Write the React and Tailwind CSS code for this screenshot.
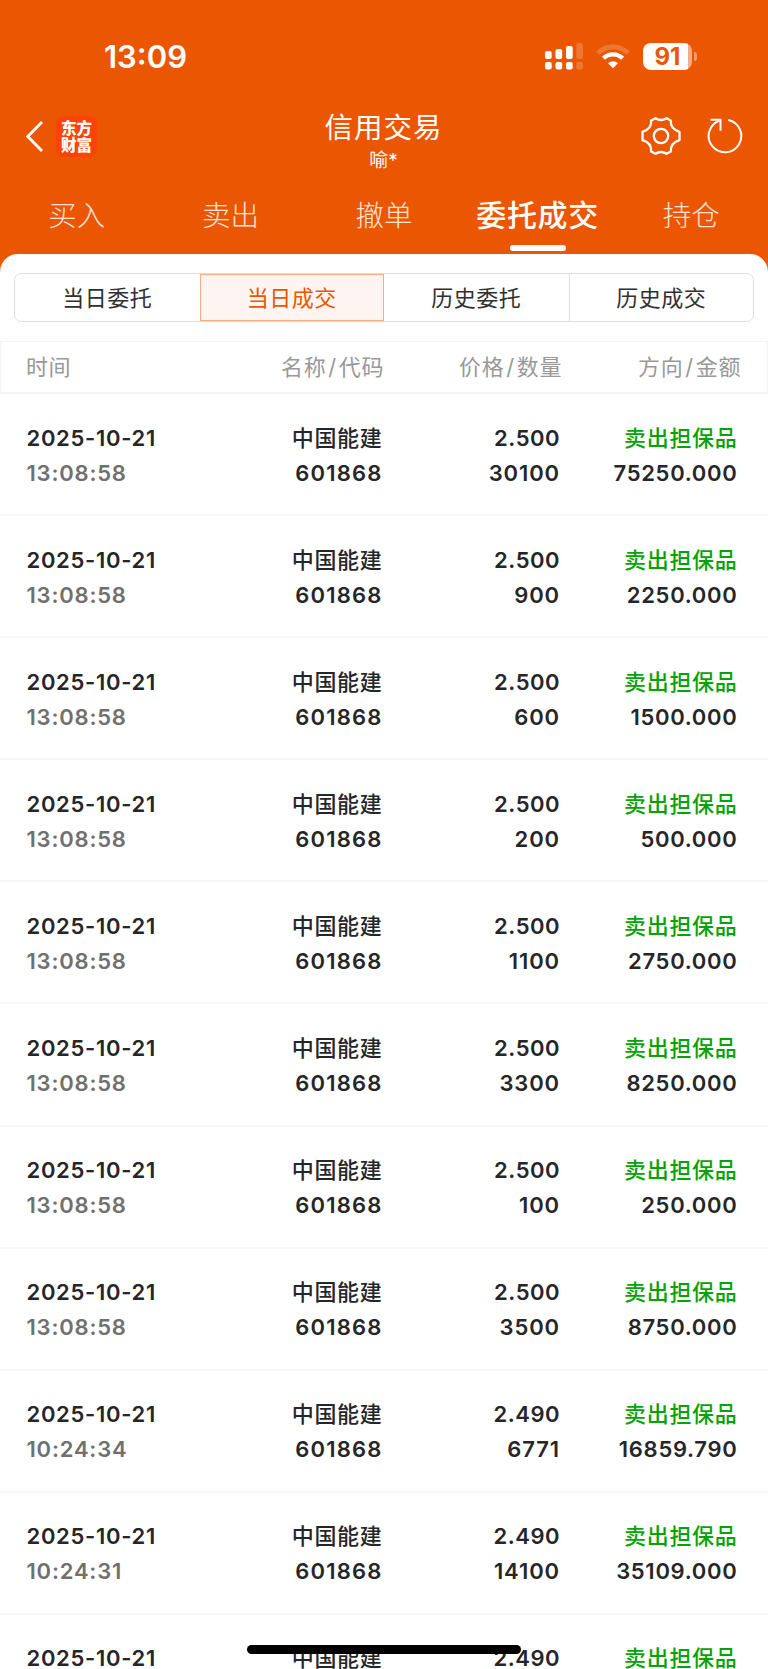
import React from "react";

const trades = [
  { time: "13:08:58", price: "2.500", qty: "30100", amount: "75250.000" },
  { time: "13:08:58", price: "2.500", qty: "900", amount: "2250.000" },
  { time: "13:08:58", price: "2.500", qty: "600", amount: "1500.000" },
  { time: "13:08:58", price: "2.500", qty: "200", amount: "500.000" },
  { time: "13:08:58", price: "2.500", qty: "1100", amount: "2750.000" },
  { time: "13:08:58", price: "2.500", qty: "3300", amount: "8250.000" },
  { time: "13:08:58", price: "2.500", qty: "100", amount: "250.000" },
  { time: "13:08:58", price: "2.500", qty: "3500", amount: "8750.000" },
  { time: "10:24:34", price: "2.490", qty: "6771", amount: "16859.790" },
  { time: "10:24:31", price: "2.490", qty: "14100", amount: "35109.000" },
  { time: "", price: "2.490", qty: "", amount: "" },
];

const tabs = ["买入", "卖出", "撤单", "委托成交", "持仓"];
const filters = ["当日委托", "当日成交", "历史委托", "历史成交"];

const StatusBar = () => (
  <div className="flex h-[112px] shrink-0 items-start justify-between pl-[104px] pr-[71px] pt-[37px]">
    <span className="text-[31px] leading-[40px] font-semibold">13:09</span>
    <div className="flex pt-[6px]">
      <svg width="38" height="27" viewBox="0 0 38 27" fill="#fff">
        <rect x="0" y="8" width="6.7" height="8" rx="2" />
        <rect x="10.5" y="6" width="6.7" height="10" rx="2" />
        <rect x="21" y="3" width="6.7" height="13" rx="2" />
        <rect x="31.3" y="0" width="6.7" height="16" rx="2" opacity=".2" />
        <rect x="0" y="19" width="6.7" height="7.5" rx="2" />
        <rect x="10.5" y="19" width="6.7" height="7.5" rx="2" />
        <rect x="21" y="19" width="6.7" height="7.5" rx="2" />
        <rect x="31.3" y="19" width="6.7" height="7.5" rx="2" opacity=".2" />
      </svg>
      <svg className="ml-[13px]" width="34" height="27" viewBox="0 0 34 27" fill="none" stroke="#fff">
        <path d="M1.8 10.2a21.5 21.5 0 0 1 30.4 0" strokeWidth="4.6" opacity=".2" />
        <path d="M7.4 15.3a13.6 13.6 0 0 1 19.2 0" strokeWidth="4.2" />
        <path d="M17 25.2l-5-5a7.2 7.2 0 0 1 10 0z" fill="#fff" stroke="none" />
      </svg>
      <div className="ml-[13px] flex h-[27px] items-center">
        <div className="flex h-[27px] w-[49px] items-center justify-center overflow-hidden rounded-[8px] bg-[linear-gradient(90deg,#fff_0_45px,#f6a982_45px)] text-[24px] leading-[27px] font-bold text-[#eb5603]">
          91
        </div>
        <div className="ml-[2px] h-[9px] w-[3px] rounded-r-full bg-[#f29a6c]" />
      </div>
    </div>
  </div>
);

const Gear = () => (
  <svg width="40" height="40" viewBox="0 0 40 40" fill="none" stroke="#fff" strokeWidth="2.3" strokeLinejoin="round">
    <path d="M14.500 2.200Q20 5.800 25.500 2.200L29.800 4.400C29.300 10.500 32 13.800 38.500 15.800V24.200C32 26.200 29.300 29.500 29.800 35.600L25.500 37.800Q20 34.200 14.500 37.800L10.200 35.600C10.700 29.500 8 26.200 1.500 24.200V15.800C8 13.800 10.700 10.500 10.200 4.400Z" />
    <circle cx="20" cy="20" r="7.2" />
  </svg>
);

const Header = () => (
  <div className="flex h-[74px] shrink-0 items-start">
    <div className="flex w-[250px] items-center pl-[26px] pt-[4px]">
      <svg width="17" height="31" viewBox="0 0 17 31" fill="none" stroke="#fff" strokeWidth="2.8">
        <path d="M16 1L1.800 15.500L16 30" />
      </svg>
      <div className="ml-[13px] flex h-[41px] w-[41px] flex-col items-center justify-center rounded-[8px] bg-[#ff4206] text-[15.500px] leading-[17px] font-black">
        <span>东方</span>
        <span>财富</span>
      </div>
    </div>
    <div className="flex flex-1 flex-col items-center pr-[1px]">
      <span className="text-[28.500px] leading-[32px] tracking-[1px]">信用交易</span>
      <span className="mt-[1px] text-[19px] leading-[32px]">喻*</span>
    </div>
    <div className="flex w-[250px] justify-end pr-[25.500px] pt-[4px]">
      <Gear />
      <svg className="ml-[26px]" width="36" height="40" viewBox="0 0 36 40" fill="none" stroke="#fff" strokeWidth="2">
        <path d="M21.300 4A16.300 16.300 0 1 1 12.500 4.600" />
        <path d="M3.500 3.800h10v11" />
      </svg>
    </div>
  </div>
);

const TradeRow = ({ trade }) => (
  <div className="grid h-[122.1px] shrink-0 grid-cols-[141px_215px_177.500px_177.500px] content-start border-b-2 border-[#f7f7f7] pl-[26.500px] pt-[26.500px] text-right text-[22px] leading-[35px] font-semibold text-[#262628]">
    <span className="text-left whitespace-nowrap tracking-[0.700px]">2025-10-21</span>
    <span className="font-medium tracking-[0.700px]">中国能建</span>
    <span className="tracking-[0.500px]">{trade.price}</span>
    <span className="font-medium tracking-[0.700px] text-[#06a306]">卖出担保品</span>
    <span className="text-left tracking-[0.800px] text-[#707070]">{trade.time}</span>
    <span className="tracking-[1.200px]">{trade.time && "601868"}</span>
    <span className="tracking-[0.900px]">{trade.qty}</span>
    <span className="tracking-[0.700px]">{trade.amount}</span>
  </div>
);

const ColumnTitle = ({ first, second }) => (
  <span>
    {first}
    <span className="mx-[2px]">/</span>
    {second}
  </span>
);

const App = () => {
  return (
    <div className="relative flex h-[1669px] w-[768px] flex-col overflow-hidden bg-[#eb5603] font-['Inter','Noto_Sans_CJK_SC',sans-serif] text-white">
      <StatusBar />
      <Header />
      <div className="grid h-[68px] shrink-0 grid-cols-5 text-center">
        {tabs.map((tab) =>
          tab === "委托成交" ? (
            <div key={tab} className="flex flex-col items-center">
              <span className="mt-[7px] text-[30px] leading-[44px] font-medium tracking-[0.700px] whitespace-nowrap">{tab}</span>
              <span className="mt-[8px] h-[6px] w-[56px] rounded-full bg-white" />
            </div>
          ) : (
            <span key={tab} className="mt-[8px] text-[28.500px] leading-[44px] font-light text-[#fde3d5]">{tab}</span>
          )
        )}
      </div>

      <div className="min-h-0 flex-1 rounded-t-[18px] bg-white pt-[19px]">
        <div className="mx-[14px] grid h-[49px] grid-cols-4 rounded-[7px] border border-[#dedfe6] text-center text-[22px] leading-[49px] tracking-[0.500px] text-[#303030]">
          {filters.map((name, i) => (
            <div
              key={name}
              className={
                i === 1
                  ? "h-[47px] border border-[#fba980] bg-[#fef5f2] leading-[47px] text-[#eb5603]"
                  : i === 3
                  ? "h-[47px] border-l border-[#dedfe6]"
                  : "h-[47px]"
              }
            >
              {name}
            </div>
          ))}
        </div>

        <div className="mt-[19px] grid h-[53px] grid-cols-[141px_217px_178px_179px] border border-b-2 border-[#f4f4f4] pl-[25px] text-right text-[22px] leading-[51px] tracking-[0.600px] text-[#999]">
          <span className="text-left">时间</span>
          <ColumnTitle first="名称" second="代码" />
          <ColumnTitle first="价格" second="数量" />
          <ColumnTitle first="方向" second="金额" />
        </div>

        {trades.map((trade, i) => (
          <TradeRow key={i} trade={trade} />
        ))}
      </div>

      {/* home indicator */}
      <div className="absolute left-[247px] top-[1645px] h-[9px] w-[274px] rounded-full bg-black" />
    </div>
  );
};

export default App;
